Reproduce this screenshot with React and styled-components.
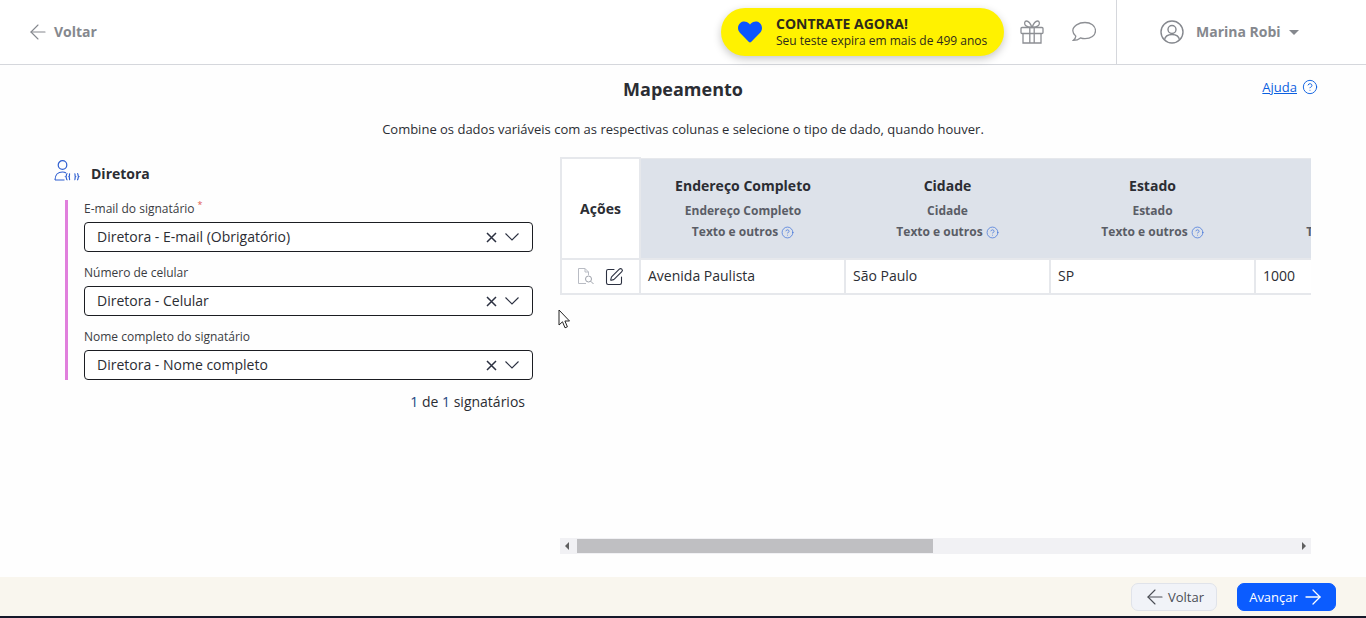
import React from "react";
import styled, { createGlobalStyle } from "styled-components";
import { ArrowLeft, ArrowRight, CircleHelp, SquarePen } from "lucide-react";
import { FaHeart } from "react-icons/fa";

const GlobalStyle = createGlobalStyle`
  html, body {
    margin: 0;
    padding: 0;
    background: #fefefe;
    color: #2b2d33;
    font-family: "Open Sans", "Liberation Sans", sans-serif;
  }
  * {
    box-sizing: border-box;
  }
`;

const Page = styled.div`
  position: relative;
  display: flex;
  flex-direction: column;
  height: 618px;
  overflow: hidden;
`;

// Top bar
const Header = styled.header`
  display: flex;
  align-items: stretch;
  flex: 0 0 65px;
  border-bottom: 1px solid #d5d7dc;
  background: #fff;
`;

const BackLink = styled.a`
  display: flex;
  align-items: center;
  gap: 4px;
  padding-left: 26px;
  color: #85888e;
  font-size: 14px;
  font-weight: 700;
`;

const BackLabel = styled.span`
  margin-bottom: 2px;
`;

const HeaderRight = styled.div`
  display: flex;
  align-items: center;
  margin-left: auto;
`;

const Promo = styled.div`
  display: flex;
  align-items: center;
  gap: 14px;
  width: 283px;
  height: 48px;
  margin-right: 16px;
  padding-left: 17px;
  border-radius: 24px;
  background: #fff200;
  box-shadow: 0 3px 8px rgba(0, 0, 0, 0.22);
`;

const PromoText = styled.div`
  display: flex;
  flex-direction: column;
  margin-top: -2px;
  color: #2e2a1c;
`;

const PromoTitle = styled.span`
  font-size: 14px;
  font-weight: 700;
  line-height: 18px;
`;

const PromoSub = styled.span`
  font-size: 12px;
  line-height: 15px;
  white-space: nowrap;
`;

const IconSlot = styled.span`
  display: flex;
  width: 24px;
  margin-right: ${({ $gap }) => $gap}px;
  color: #8d8f94;
`;

const UserMenu = styled.div`
  display: flex;
  align-items: center;
  align-self: stretch;
  width: 250px;
  padding-left: 43px;
  border-left: 1px solid #d5d7dc;
  color: #85888e;
`;

const UserName = styled.span`
  margin: 0 8px 2px 12px;
  font-size: 14px;
  font-weight: 700;
`;

const Caret = styled.span`
  width: 0;
  height: 0;
  border-left: 5px solid transparent;
  border-right: 5px solid transparent;
  border-top: 5px solid #85888e;
`;

// Main area
const Main = styled.main`
  display: flex;
  flex: 1;
  flex-direction: column;
  min-height: 0;
`;

const TitleRow = styled.div`
  display: grid;
  grid-template-columns: 1fr auto 1fr;
  align-items: center;
  height: 48px;
  padding: 0 48px;
`;

const Title = styled.h1`
  grid-column: 2;
  margin: 0;
  font-size: 18px;
  font-weight: 700;
`;

const HelpLink = styled.a`
  display: flex;
  justify-self: end;
  align-items: center;
  gap: 5px;
  margin-bottom: 4px;
  color: #0b5fe0;
  font-size: 13px;
  text-decoration: underline;
`;

const Description = styled.p`
  margin: 8px 0 19px;
  font-size: 13px;
  line-height: 17px;
  text-align: center;
`;

const Columns = styled.div`
  display: flex;
  padding-left: 54px;
`;

const SignerPanel = styled.section`
  flex: 0 0 479px;
  margin-right: 27px;
`;

const SignerHeading = styled.div`
  display: flex;
  align-items: center;
  gap: 11px;
  height: 28px;
  margin: 2px 0 13px;
  font-size: 14px;
  font-weight: 700;
`;

const SignerGlyph = styled.svg`
  margin-top: -4px;
`;

const FieldGroup = styled.div`
  display: flex;
  flex-direction: column;
  gap: 12px;
  margin-left: 11px;
  padding-left: 16px;
  border-left: 3px solid #e07fdc;
`;

const Field = styled.div`
  display: flex;
  flex-direction: column;
  gap: 5px;
`;

const Label = styled.label`
  color: #3a3c42;
  font-size: 12px;
  line-height: 17px;
  white-space: nowrap;
`;

const Required = styled.sup`
  margin-left: 3px;
  color: #e0584f;
  font-size: 9px;
  line-height: 0;
`;

const Select = styled.div`
  display: flex;
  align-items: center;
  height: 30px;
  padding: 0 13px 2px 12px;
  border: 1px solid #1b1d22;
  border-radius: 4px;
  background: #fff;
  font-size: 14px;
`;

const SelectValue = styled.span`
  flex: 1;
`;

const SelectActions = styled.span`
  display: flex;
  align-items: center;
  gap: 8px;
  margin-top: 2px;
  color: #2b3040;
`;

const Counter = styled.div`
  margin-top: 13px;
  padding-right: 8px;
  font-size: 14px;
  line-height: 18px;
  text-align: right;
`;

const CounterNumber = styled.span`
  color: #24457f;
`;

const TableArea = styled.section`
  display: flex;
  flex: 0 0 751px;
  flex-direction: column;
  min-width: 0;
  height: 397px;
`;

const TableClip = styled.div`
  flex: 1;
  overflow: hidden;
`;

const Table = styled.table`
  width: 899px;
  border-collapse: collapse;
  table-layout: fixed;
`;

const ActionsHead = styled.th`
  width: 79px;
  height: 101px;
  padding-bottom: 2px;
  border: 2px solid #e6e8ec;
  background: #fff;
  font-size: 14px;
  font-weight: 700;
`;

const ColumnHead = styled.th`
  width: 205px;
  padding: 0;
  border-top: 1px solid #e6e8ec;
  border-bottom: 2px solid #e6e8ec;
  background: #dde2ea;
  font-weight: 700;
  vertical-align: middle;
`;

const HeadStack = styled.div`
  display: flex;
  flex-direction: column;
  align-items: center;
  gap: 6px;
  padding-top: 1px;
  white-space: nowrap;
`;

const HeadName = styled.span`
  font-size: 14px;
  line-height: 18px;
`;

const HeadSource = styled.span`
  margin-top: 2px;
  color: #5a5d66;
  font-size: 12px;
  line-height: 16px;
`;

const HeadType = styled.span`
  display: flex;
  align-items: center;
  gap: 3px;
  margin-top: -1px;
  color: #5a5d66;
  font-size: 12px;
  line-height: 16px;
`;

const ActionsCell = styled.td`
  height: 35px;
  border: 2px solid #e6e8ec;
  border-top: 0;
  background: #fff;
`;

const ActionIcons = styled.div`
  display: flex;
  align-items: center;
  justify-content: center;
  gap: 10px;
`;

const DataCell = styled.td`
  padding: 0 7px 2px;
  border-right: 2px solid #e6e8ec;
  border-bottom: 2px solid #e6e8ec;
  background: #fff;
  font-size: 14px;
`;

const ScrollBar = styled.div`
  display: flex;
  flex: 0 0 16px;
  align-items: center;
  justify-content: space-between;
  padding: 0 5px;
  background: #f1f1f4;
`;

const ScrollThumb = styled.div`
  position: absolute;
  width: 356px;
  height: 14px;
  margin-left: 12px;
  background: #bfbfc2;
`;

const ScrollArrow = styled.span`
  width: 0;
  height: 0;
  border-top: 4px solid transparent;
  border-bottom: 4px solid transparent;
  border-${({ $dir }) => ($dir === "left" ? "right" : "left")}: 4px solid #606060;
`;

// Footer
const Footer = styled.footer`
  display: flex;
  flex: 0 0 41px;
  align-items: flex-start;
  justify-content: flex-end;
  gap: 20px;
  padding: 6px 30px 0 0;
  border-bottom: 2px solid #15182a;
  background: #f9f6ee;
`;

const Button = styled.button`
  display: flex;
  align-items: center;
  justify-content: center;
  gap: ${({ $primary }) => ($primary ? "3px" : "1px")};
  width: ${({ $primary }) => ($primary ? "99px" : "86px")};
  height: 28px;
  padding: ${({ $primary }) => ($primary ? "0 0 0 1px" : "0 1px 0 0")};
  border: 1px solid ${({ $primary }) => ($primary ? "#0b5cff" : "#e0e3ea")};
  border-radius: 7px;
  background: ${({ $primary }) => ($primary ? "#0b5cff" : "#f1f3f8")};
  color: ${({ $primary }) => ($primary ? "#fff" : "#4a4d55")};
  font-family: inherit;
  font-size: 13px;
`;

const Cursor = styled.svg`
  position: absolute;
  top: 309px;
  left: 558px;
`;

const GiftIcon = () => (
  <svg width="24" height="24" viewBox="0 0 24 24" fill="none" stroke="currentColor" strokeWidth="1.3">
    <rect x="1" y="7.500" width="22" height="6" rx="1" />
    <path d="M3 13.500V23h18v-9.500M9.800 7.500V23M14.200 7.500V23" />
    <path d="M12 7.500C10.500 3.500 8.500 1 6.500 1 4.500 1 4 4 5.500 5.500 7 7 9.500 7.500 12 7.500zM12 7.500c1.500-4 3.500-6.500 5.500-6.500 2 0 2.500 3 1 4.500C17 7 14.500 7.500 12 7.500z" />
  </svg>
);

const ChatIcon = () => (
  <svg width="24" height="24" viewBox="0 0 24 24" fill="none" stroke="currentColor" strokeWidth="1.3">
    <path d="M13 2.500c5.800 0 10.500 3.500 10.500 8.200s-4.700 8-10.500 8c-1.700 0-3.200-.3-4.600-.8-1.900 1.700-4.300 2.400-7 2.400 1.300-1.100 2.300-2.600 2.400-4.200C2 14.400.8 12.700.8 10.700c0-4.700 6-8.200 12.200-8.200z" />
  </svg>
);

const UserCircleIcon = () => (
  <svg width="24" height="24" viewBox="0 0 24 24" fill="none" stroke="currentColor" strokeWidth="1.4">
    <circle cx="12" cy="12" r="11" />
    <circle cx="12" cy="9.500" r="4" />
    <path d="M4.500 20c.5-3.500 3.500-5.500 7.500-5.500s7 2 7.500 5.500" />
  </svg>
);

const SignerIcon = () => (
  <SignerGlyph width="26" height="22" viewBox="0 0 26 22" fill="none" stroke="#2f5fd0" strokeWidth="1.200">
    <circle cx="8.500" cy="5" r="4.300" />
    <path d="M1 20c0-5 3-8 7.500-8 1.500 0 2.500.3 3.500 1M1 20h9.500" />
    <path d="M13.500 13.500c-1.800 0-.5 2.700-1.700 3.200 1.200.5-.1 3.300 1.700 3.300M16 13.500c-1.200.5 0 2.700-1 3.200 1 .5-.2 2.800 1 3.300" />
    <path d="M20.500 13.500c1.200.5 0 2.700 1 3.200-1 .5.200 2.800-1 3.300M23 13.500c1.800 0 .5 2.700 1.700 3.200-1.200.5.1 3.300-1.700 3.300" />
  </SignerGlyph>
);

const DocSearchIcon = () => (
  <svg width="16" height="17" viewBox="0 0 16 17" fill="none" stroke="#b9bcc4" strokeWidth="1">
    <path d="M8 15.500H.5V.5h6.500l3.500 3.500v3M7 .5V4h3.500" />
    <circle cx="10.500" cy="11" r="3" stroke="#9ea2ab" />
    <path d="M12.700 13.200l2.800 2.800" stroke="#9ea2ab" />
  </svg>
);

const ClearIcon = () => (
  <svg width="11" height="11" viewBox="0 0 11 11" fill="none" stroke="currentColor" strokeWidth="1.500">
    <path d="M1 1l9 9M10 1l-9 9" />
  </svg>
);

const OpenIcon = () => (
  <svg width="14" height="8" viewBox="0 0 14 8" fill="none" stroke="currentColor" strokeWidth="1.100">
    <path d="M.5.500L7 7l6.500-6.500" />
  </svg>
);

const fields = [
  { label: "E-mail do signatário", value: "Diretora - E-mail (Obrigatório)", required: true },
  { label: "Número de celular", value: "Diretora - Celular" },
  { label: "Nome completo do signatário", value: "Diretora - Nome completo" },
];

const tableColumns = [
  { name: "Endereço Completo", value: "Avenida Paulista" },
  { name: "Cidade", value: "São Paulo" },
  { name: "Estado", value: "SP" },
  { name: "Número", value: "1000" },
];

const App = () => (
  <Page>
    <GlobalStyle />
    <Header>
      <BackLink>
        <ArrowLeft size={24} strokeWidth={1.1} />
        <BackLabel>Voltar</BackLabel>
      </BackLink>
      <HeaderRight>
        <Promo>
          <FaHeart size={24} color="#0b55ff" />
          <PromoText>
            <PromoTitle>CONTRATE AGORA!</PromoTitle>
            <PromoSub>Seu teste expira em mais de 499 anos</PromoSub>
          </PromoText>
        </Promo>
        <IconSlot $gap={28}>
          <GiftIcon />
        </IconSlot>
        <IconSlot $gap={20}>
          <ChatIcon />
        </IconSlot>
        <UserMenu>
          <UserCircleIcon />
          <UserName>Marina Robi</UserName>
          <Caret />
        </UserMenu>
      </HeaderRight>
    </Header>
    <Main>
      <TitleRow>
        <Title>Mapeamento</Title>
        <HelpLink>
          Ajuda
          <CircleHelp size={16} strokeWidth={1.4} />
        </HelpLink>
      </TitleRow>
      <Description>
        Combine os dados variáveis com as respectivas colunas e selecione o tipo de dado, quando houver.
      </Description>
      <Columns>
        <SignerPanel>
          <SignerHeading>
            <SignerIcon />
            Diretora
          </SignerHeading>
          <FieldGroup>
            {fields.map((field) => (
              <Field key={field.label}>
                <Label>
                  {field.label}
                  {field.required && <Required>*</Required>}
                </Label>
                <Select>
                  <SelectValue>{field.value}</SelectValue>
                  <SelectActions>
                    <ClearIcon />
                    <OpenIcon />
                  </SelectActions>
                </Select>
              </Field>
            ))}
          </FieldGroup>
          <Counter>
            <CounterNumber>1</CounterNumber> de <CounterNumber>1</CounterNumber> signatários
          </Counter>
        </SignerPanel>
        <TableArea>
          <TableClip>
            <Table>
              <thead>
                <tr>
                  <ActionsHead>Ações</ActionsHead>
                  {tableColumns.map((column) => (
                    <ColumnHead key={column.name}>
                      <HeadStack>
                        <HeadName>{column.name}</HeadName>
                        <HeadSource>{column.name}</HeadSource>
                        <HeadType>
                          Texto e outros
                          <CircleHelp size={13} strokeWidth={1.3} color="#3a6fd8" />
                        </HeadType>
                      </HeadStack>
                    </ColumnHead>
                  ))}
                </tr>
              </thead>
              <tbody>
                <tr>
                  <ActionsCell>
                    <ActionIcons>
                      <DocSearchIcon />
                      <SquarePen size={20} strokeWidth={1.3} color="#2b3040" />
                    </ActionIcons>
                  </ActionsCell>
                  {tableColumns.map((column) => (
                    <DataCell key={column.name}>{column.value}</DataCell>
                  ))}
                </tr>
              </tbody>
            </Table>
          </TableClip>
          <ScrollBar>
            <ScrollArrow $dir="left" />
            <ScrollThumb />
            <ScrollArrow $dir="right" />
          </ScrollBar>
        </TableArea>
      </Columns>
    </Main>
    <Footer>
      <Button>
        <ArrowLeft size={24} strokeWidth={1.1} />
        Voltar
      </Button>
      <Button $primary>
        Avançar
        <ArrowRight size={24} strokeWidth={1.3} />
      </Button>
    </Footer>
    <Cursor width="13" height="20" viewBox="0 0 13 20">
      <path d="M1 1v15l3.500-3.200 2.500 6 2.400-1-2.500-5.800h4.600z" fill="#fff" stroke="#222" strokeWidth="1" />
    </Cursor>
  </Page>
);

export default App;
